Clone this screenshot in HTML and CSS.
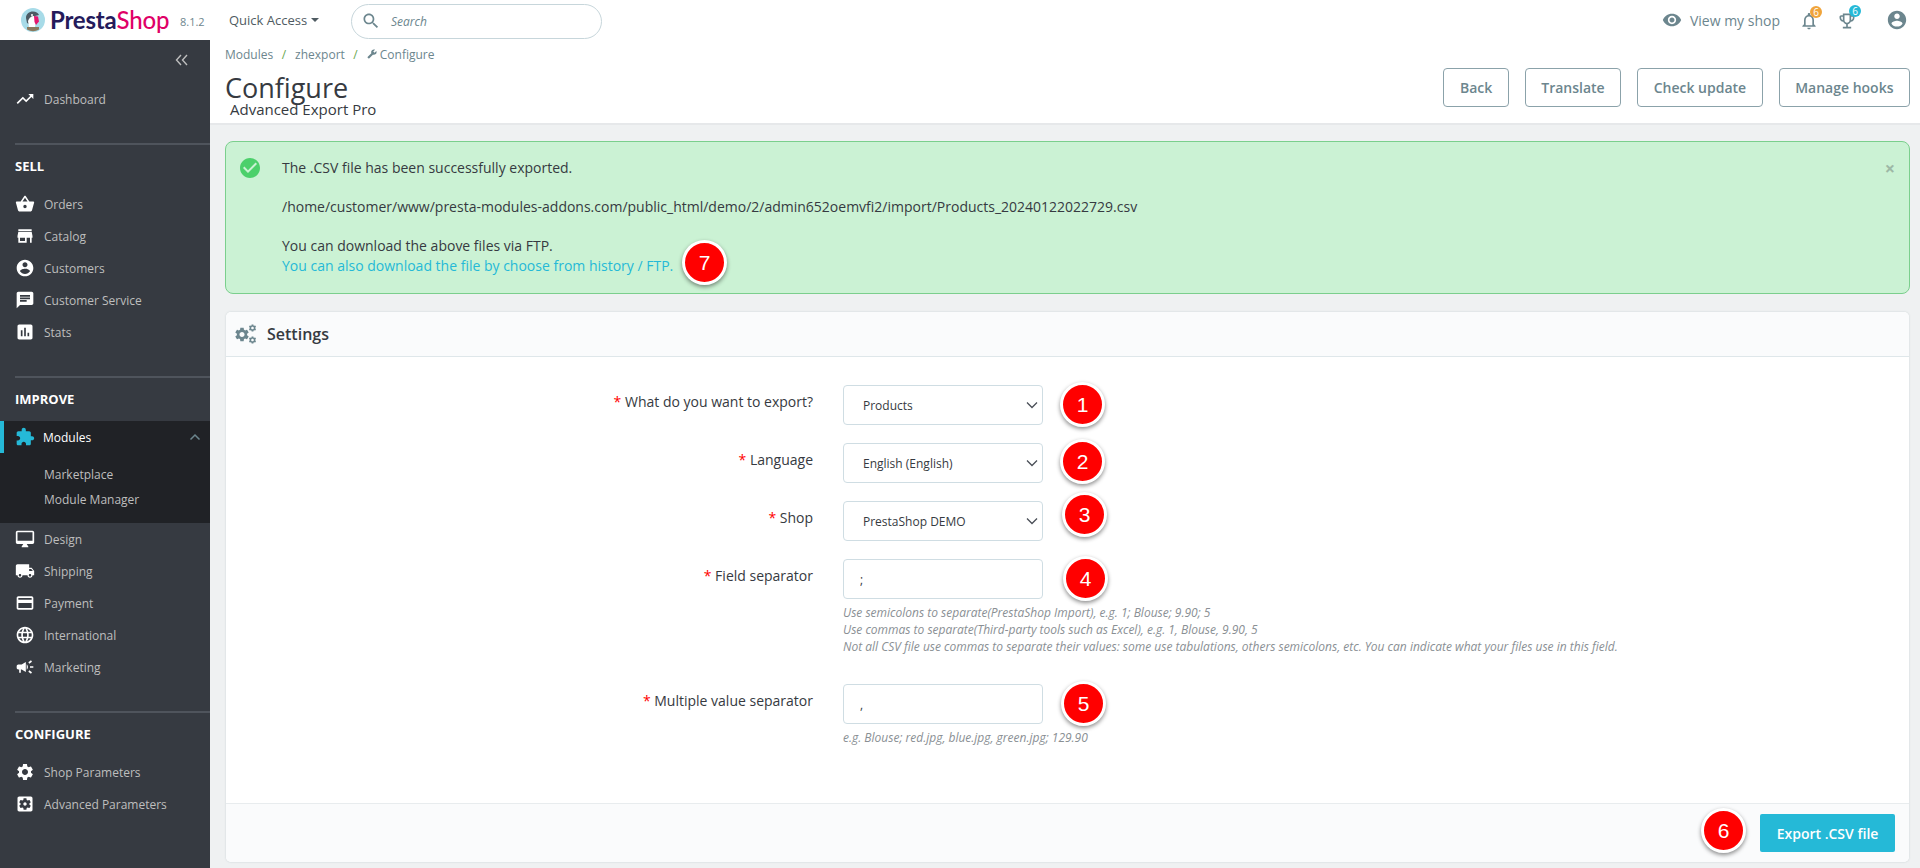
FILE: index.html
```html
<!DOCTYPE html>
<html lang="en">
<head>
<meta charset="utf-8">
<title>Configure - Advanced Export Pro</title>
<link rel="stylesheet" href="styles.css">
</head>
<body>
<svg class="sprite" aria-hidden="true">
  <symbol id="i-trend" viewBox="0 0 24 24"><path d="M16 6l2.29 2.29-4.88 4.88-4-4L2 16.59 3.41 18l6-6 4 4 6.3-6.29L22 12V6z"/></symbol>
  <symbol id="i-basket" viewBox="0 0 24 24"><path d="M17.21 9l-4.38-6.56c-.19-.28-.51-.42-.83-.42-.32 0-.64.14-.83.43L6.79 9H2c-.55 0-1 .45-1 1 0 .09.01.18.04.27l2.54 9.27c.23.84 1 1.46 1.92 1.46h13c.92 0 1.69-.62 1.93-1.46l2.54-9.27L23 10c0-.55-.45-1-1-1h-4.79zM9 9l3-4.4L15 9H9zm3 8c-1.1 0-2-.9-2-2s.9-2 2-2 2 .9 2 2-.9 2-2 2z"/></symbol>
  <symbol id="i-store" viewBox="0 0 24 24"><path d="M20 4H4v2h16V4zm1 10v-2l-1-5H4l-1 5v2h1v6h10v-6h4v6h2v-6h1zm-9 4H6v-4h6v4z"/></symbol>
  <symbol id="i-account" viewBox="0 0 24 24"><path d="M12 2C6.48 2 2 6.48 2 12s4.48 10 10 10 10-4.48 10-10S17.52 2 12 2zm0 3c1.66 0 3 1.34 3 3s-1.34 3-3 3-3-1.34-3-3 1.34-3 3-3zm0 14.2c-2.5 0-4.71-1.28-6-3.22.03-1.99 4-3.08 6-3.08 1.99 0 5.97 1.09 6 3.08-1.29 1.94-3.5 3.22-6 3.22z"/></symbol>
  <symbol id="i-chat" viewBox="0 0 24 24"><path d="M20 2H4c-1.1 0-1.99.9-1.99 2L2 22l4-4h14c1.1 0 2-.9 2-2V4c0-1.1-.9-2-2-2zM6 9h12v2H6V9zm8 5H6v-2h8v2zm4-6H6V6h12v2z"/></symbol>
  <symbol id="i-stats" viewBox="0 0 24 24"><path d="M19 3H5c-1.1 0-2 .9-2 2v14c0 1.1.9 2 2 2h14c1.1 0 2-.9 2-2V5c0-1.1-.9-2-2-2zM9 17H7v-7h2v7zm4 0h-2V7h2v10zm4 0h-2v-4h2v4z"/></symbol>
  <symbol id="i-puzzle" viewBox="0 0 24 24"><path d="M20.5 11H19V7c0-1.1-.9-2-2-2h-4V3.5C13 2.12 11.88 1 10.5 1S8 2.12 8 3.5V5H4c-1.1 0-1.99.9-1.99 2v3.8H3.5c1.49 0 2.7 1.21 2.7 2.7s-1.21 2.7-2.7 2.7H2V20c0 1.1.9 2 2 2h3.8v-1.5c0-1.49 1.21-2.7 2.7-2.7 1.49 0 2.7 1.21 2.7 2.7V22H17c1.1 0 2-.9 2-2v-4h1.5c1.38 0 2.5-1.12 2.5-2.5S21.88 11 20.5 11z"/></symbol>
  <symbol id="i-desktop" viewBox="0 0 24 24"><path d="M21 2H3c-1.1 0-2 .9-2 2v12c0 1.1.9 2 2 2h7l-2 3v1h8v-1l-2-3h7c1.1 0 2-.9 2-2V4c0-1.1-.9-2-2-2zm0 12H3V4h18v10z"/></symbol>
  <symbol id="i-truck" viewBox="0 0 24 24"><path d="M20 8h-3V4H3c-1.1 0-2 .9-2 2v11h2c0 1.66 1.34 3 3 3s3-1.34 3-3h6c0 1.66 1.34 3 3 3s3-1.34 3-3h2v-5l-3-4zM6 18.5c-.83 0-1.5-.67-1.5-1.5s.67-1.5 1.5-1.5 1.5.67 1.5 1.5-.67 1.5-1.5 1.5zm13.5-9l1.96 2.5H17V9.5h2.5zm-1.5 9c-.83 0-1.5-.67-1.5-1.5s.67-1.5 1.5-1.5 1.5.67 1.5 1.5-.67 1.5-1.5 1.5z"/></symbol>
  <symbol id="i-card" viewBox="0 0 24 24"><path d="M20 4H4c-1.11 0-1.99.89-1.99 2L2 18c0 1.11.89 2 2 2h16c1.11 0 2-.89 2-2V6c0-1.11-.89-2-2-2zm0 14H4v-6h16v6zm0-10H4V6h16v2z"/></symbol>
  <symbol id="i-globe" viewBox="0 0 24 24"><path d="M11.99 2C6.47 2 2 6.48 2 12s4.47 10 9.99 10C17.52 22 22 17.52 22 12S17.52 2 11.99 2zm6.93 6h-2.95c-.32-1.25-.78-2.45-1.38-3.56 1.84.63 3.37 1.91 4.33 3.56zM12 4.04c.83 1.2 1.48 2.53 1.91 3.96h-3.82c.43-1.43 1.08-2.76 1.91-3.96zM4.26 14C4.1 13.36 4 12.69 4 12s.1-1.36.26-2h3.38c-.08.66-.14 1.32-.14 2 0 .68.06 1.34.14 2H4.26zm.82 2h2.95c.32 1.25.78 2.45 1.38 3.56-1.84-.63-3.37-1.9-4.33-3.56zm2.95-8H5.08c.96-1.66 2.49-2.93 4.33-3.56C8.81 5.55 8.35 6.75 8.03 8zM12 19.96c-.83-1.2-1.48-2.53-1.91-3.96h3.82c-.43 1.43-1.08 2.76-1.91 3.96zM14.34 14H9.66c-.09-.66-.16-1.32-.16-2 0-.68.07-1.35.16-2h4.68c.09.65.16 1.32.16 2 0 .68-.07 1.34-.16 2zm.25 5.56c.6-1.11 1.06-2.31 1.38-3.56h2.95c-.96 1.65-2.49 2.93-4.33 3.56zM16.36 14c.08-.66.14-1.32.14-2 0-.68-.06-1.34-.14-2h3.38c.16.64.26 1.31.26 2s-.1 1.36-.26 2h-3.38z"/></symbol>
  <symbol id="i-campaign" viewBox="0 0 24 24"><path d="M18 11v2h4v-2h-4zm-2 6.61c.96.71 2.21 1.65 3.2 2.39.4-.53.8-1.07 1.2-1.6-.99-.74-2.24-1.68-3.2-2.4-.4.54-.8 1.08-1.2 1.61zM20.4 5.6c-.4-.53-.8-1.07-1.2-1.6-.99.74-2.24 1.68-3.2 2.4.4.53.8 1.07 1.2 1.6.96-.72 2.21-1.65 3.2-2.4zM4 9c-1.1 0-2 .9-2 2v2c0 1.1.9 2 2 2h1v4h2v-4h1l5 3V6L8 9H4zm11.5 3c0-1.33-.58-2.53-1.5-3.35v6.69c.92-.81 1.5-2.01 1.5-3.34z"/></symbol>
  <symbol id="i-gear" viewBox="0 0 24 24"><path d="M19.14 12.94c.04-.3.06-.61.06-.94 0-.32-.02-.64-.07-.94l2.03-1.58c.18-.14.23-.41.12-.61l-1.92-3.32c-.12-.22-.37-.29-.59-.22l-2.39.96c-.5-.38-1.03-.7-1.62-.94l-.36-2.54c-.04-.24-.24-.41-.48-.41h-3.84c-.24 0-.43.17-.47.41l-.36 2.54c-.59.24-1.13.57-1.62.94l-2.39-.96c-.22-.08-.47 0-.59.22L2.74 8.87c-.12.21-.08.47.12.61l2.03 1.58c-.05.3-.09.63-.09.94s.02.64.07.94l-2.03 1.58c-.18.14-.23.41-.12.61l1.92 3.32c.12.22.37.29.59.22l2.39-.96c.5.38 1.03.7 1.62.94l.36 2.54c.05.24.24.41.48.41h3.84c.24 0 .44-.17.47-.41l.36-2.54c.59-.24 1.13-.56 1.62-.94l2.39.96c.22.08.47 0 .59-.22l1.92-3.32c.12-.22.07-.47-.12-.61l-2.01-1.58zM12 15.6c-1.98 0-3.6-1.62-3.6-3.6s1.62-3.6 3.6-3.6 3.6 1.62 3.6 3.6-1.62 3.6-3.6 3.6z"/></symbol>
  <symbol id="i-gearbox" viewBox="0 0 24 24"><path d="M12 10c-1.1 0-2 .9-2 2s.9 2 2 2 2-.9 2-2-.9-2-2-2zm7-7H5c-1.11 0-2 .9-2 2v14c0 1.1.89 2 2 2h14c1.11 0 2-.9 2-2V5c0-1.1-.89-2-2-2zm-1.75 9c0 .23-.02.46-.05.68l1.48 1.16c.13.11.17.3.08.45l-1.4 2.42c-.09.15-.27.21-.43.15l-1.74-.7c-.36.28-.76.51-1.18.69l-.26 1.85c-.03.17-.18.3-.35.3h-2.8c-.17 0-.32-.13-.35-.29l-.26-1.85c-.43-.18-.82-.41-1.18-.69l-1.74.7c-.16.06-.34 0-.43-.15l-1.4-2.42c-.09-.15-.05-.34.08-.45l1.48-1.16c-.03-.23-.05-.46-.05-.69 0-.23.02-.46.05-.68l-1.48-1.16c-.13-.11-.17-.3-.08-.45l1.4-2.42c.09-.15.27-.21.43-.15l1.74.7c.36-.28.76-.51 1.18-.69l.26-1.85c.03-.17.18-.3.35-.3h2.8c.17 0 .32.13.35.29l.26 1.85c.43.18.82.41 1.18.69l1.74-.7c.16-.06.34 0 .43.15l1.4 2.42c.09.15.05.34-.08.45l-1.48 1.16c.03.23.05.46.05.69z"/></symbol>
</svg>

<header class="topbar">
  <a class="logo">
    <svg class="logo-mark" viewBox="0 0 24 26" aria-hidden="true">
      <circle cx="12" cy="13" r="12" fill="#a7dbe8"/>
      <path d="M5 11c0-4 3-6.500 7-6.500 3 0 5 1.500 6 3.500l-4 1-1 2-3 3-2 3-2-1z" fill="#4c5a63"/>
      <path d="M7 14c1-3 3-5 6-5l2 5-1 6H8z" fill="#fff"/>
      <path d="M13 9l4 .5 1 5-3 3.500-1.500-3z" fill="#e5176e"/>
      <path d="M6 20h12v2.500a12 12 0 0 1-12 0z" fill="#8a7a5e"/>
      <circle cx="11" cy="8" r="1" fill="#fff"/>
    </svg>
    <span class="logo-text"><span class="logo-presta">Presta</span><span class="logo-shop">Shop</span></span>
  </a>
  <span class="version">8.1.2</span>
  <span class="quick">Quick Access<i class="caret"></i></span>
  <label class="search">
    <svg class="search-icon" viewBox="0 0 24 24" aria-hidden="true"><path d="M15.5 14h-.79l-.28-.27C15.41 12.59 16 11.11 16 9.500 16 5.910 13.090 3 9.500 3S3 5.910 3 9.500 5.910 16 9.500 16c1.610 0 3.090-.59 4.230-1.570l.27.28v.79l5 4.990L20.490 19l-4.990-5zm-6 0C7.010 14 5 11.990 5 9.500S7.010 5 9.500 5 14 7.010 14 9.500 11.990 14 9.500 14z"/></svg>
    <span class="search-text">Search</span>
  </label>
  <div class="top-right">
    <span class="view-shop">
      <svg class="eye" viewBox="0 0 24 24" aria-hidden="true"><path d="M12 4.500C7 4.500 2.730 7.610 1 12c1.730 4.390 6 7.500 11 7.500s9.270-3.110 11-7.500c-1.730-4.390-6-7.500-11-7.500zM12 17c-2.760 0-5-2.240-5-5s2.240-5 5-5 5 2.240 5 5-2.240 5-5 5zm0-8c-1.660 0-3 1.340-3 3s1.340 3 3 3 3-1.340 3-3-1.340-3-3-3z"/></svg>
      View my shop
    </span>
    <span class="notif notif-bell">
      <svg viewBox="0 0 24 24" aria-hidden="true"><path d="M12 22c1.100 0 2-.9 2-2h-4c0 1.100.9 2 2 2zm6-6v-5c0-3.070-1.630-5.640-4.500-6.320V4c0-.83-.67-1.500-1.500-1.500s-1.500.67-1.500 1.500v.68C7.640 5.360 6 7.920 6 11v5l-2 2v1h16v-1l-2-2zm-2 1H8v-6c0-2.480 1.510-4.500 4-4.500s4 2.020 4 4.500v6z"/></svg>
      <b class="count count-orange">6</b>
    </span>
    <span class="notif notif-cup">
      <svg viewBox="0 0 24 24" aria-hidden="true"><path d="M19 5h-2V3H7v2H5c-1.100 0-2 .9-2 2v1c0 2.550 1.920 4.630 4.390 4.940.63 1.500 1.980 2.630 3.610 2.960V19H7v2h10v-2h-4v-3.100c1.630-.33 2.980-1.460 3.610-2.960C19.080 12.630 21 10.550 21 8V7c0-1.100-.9-2-2-2zM5 8V7h2v3.820C5.840 10.400 5 9.300 5 8zm7 6c-1.650 0-3-1.350-3-3V5h6v6c0 1.650-1.350 3-3 3zm7-6c0 1.300-.84 2.400-2 2.820V7h2v1z"/></svg>
      <b class="count count-blue">6</b>
    </span>
    <svg class="avatar" aria-hidden="true"><use href="#i-account"/></svg>
  </div>
</header>

<div class="layout">
  <nav class="sidebar">
    <div class="collapse">
      <svg viewBox="0 0 14 12" aria-hidden="true"><path d="M6 1 1.500 6 6 11M12 1 7.500 6 12 11"/></svg>
    </div>
    <a class="item item-first"><svg class="ic"><use href="#i-trend"/></svg>Dashboard</a>

    <hr class="sep">
    <h2 class="sect">SELL</h2>
    <a class="item"><svg class="ic"><use href="#i-basket"/></svg>Orders</a>
    <a class="item"><svg class="ic"><use href="#i-store"/></svg>Catalog</a>
    <a class="item"><svg class="ic"><use href="#i-account"/></svg>Customers</a>
    <a class="item"><svg class="ic"><use href="#i-chat"/></svg>Customer Service</a>
    <a class="item"><svg class="ic"><use href="#i-stats"/></svg>Stats</a>

    <hr class="sep">
    <h2 class="sect">IMPROVE</h2>
    <div class="active-group">
      <a class="item item-active"><svg class="ic"><use href="#i-puzzle"/></svg>Modules
        <svg class="chev-up" viewBox="0 0 12 8" aria-hidden="true"><path d="M1.500 6.500 6 2l4.500 4.500"/></svg>
      </a>
      <a class="sub">Marketplace</a>
      <a class="sub">Module Manager</a>
    </div>
    <a class="item"><svg class="ic"><use href="#i-desktop"/></svg>Design</a>
    <a class="item"><svg class="ic"><use href="#i-truck"/></svg>Shipping</a>
    <a class="item"><svg class="ic"><use href="#i-card"/></svg>Payment</a>
    <a class="item"><svg class="ic"><use href="#i-globe"/></svg>International</a>
    <a class="item"><svg class="ic"><use href="#i-campaign"/></svg>Marketing</a>

    <hr class="sep">
    <h2 class="sect">CONFIGURE</h2>
    <a class="item"><svg class="ic"><use href="#i-gear"/></svg>Shop Parameters</a>
    <a class="item"><svg class="ic"><use href="#i-gearbox"/></svg>Advanced Parameters</a>
  </nav>

  <main class="content">
    <section class="pagehead">
      <div class="head-left">
        <div class="crumbs">
          <span>Modules</span><i class="slash">/</i><span>zhexport</span><i class="slash">/</i>
          <svg class="wrench" viewBox="0 0 24 24" aria-hidden="true"><path d="M1.300 19l9.100-9.100c-.9-2.300-.4-5 1.500-6.900 2-2 5-2.400 7.400-1.300L15 6l3 3 4.400-4.300c1.200 2.400.7 5.400-1.300 7.400-1.900 1.900-4.600 2.400-6.900 1.500l-9.100 9.100c-.4.4-1 .4-1.400 0l-2.300-2.300c-.5-.4-.5-1.100-.1-1.400z"/></svg>
          <span>Configure</span>
        </div>
        <h1 class="title">Configure</h1>
        <div class="subtitle">Advanced Export Pro</div>
      </div>
      <div class="head-actions">
        <a class="btn">Back</a>
        <a class="btn">Translate</a>
        <a class="btn">Check update</a>
        <a class="btn">Manage hooks</a>
      </div>
    </section>

    <div class="page">
      <div class="alert">
        <svg class="alert-icon" viewBox="0 0 24 24" aria-hidden="true"><path d="M12 2C6.480 2 2 6.480 2 12s4.480 10 10 10 10-4.480 10-10S17.520 2 12 2zm-2 15l-5-5 1.410-1.410L10 14.170l7.590-7.590L19 8l-9 9z"/></svg>
        <div class="alert-body">
          <p>The .CSV file has been successfully exported.</p>
          <p>/home/customer/www/presta-modules-addons.com/public_html/demo/2/admin652oemvfi2/import/Products_20240122022729.csv</p>
          <p class="tight">You can download the above files via FTP.</p>
          <p><a class="link">You can also download the file by choose from history / FTP.</a></p>
        </div>
        <span class="close">×</span>
        <span class="mark mark-7">7</span>
      </div>

      <section class="panel">
        <div class="panel-head">
          <svg class="cogs" viewBox="0 0 22 20" aria-hidden="true">
            <use href="#i-gear" x="-1.500" y="2" width="17" height="17"/>
            <use href="#i-gear" x="13" y="-.5" width="9" height="9"/>
            <use href="#i-gear" x="13" y="11.500" width="9" height="9"/>
          </svg>
          <h3>Settings</h3>
        </div>
        <form class="panel-body">
          <div class="row">
            <label class="lbl"><em>*</em> What do you want to export?</label>
            <div class="ctrl">
              <div class="select-wrap">
                <select class="field"><option>Products</option></select>
                <svg class="chev" viewBox="0 0 12 8" aria-hidden="true"><path d="M1 1.500 6 6.500l5-5"/></svg>
              </div>
              <span class="mark mark-1">1</span>
            </div>
          </div>
          <div class="row">
            <label class="lbl"><em>*</em> Language</label>
            <div class="ctrl">
              <div class="select-wrap">
                <select class="field"><option>English (English)</option></select>
                <svg class="chev" viewBox="0 0 12 8" aria-hidden="true"><path d="M1 1.500 6 6.500l5-5"/></svg>
              </div>
              <span class="mark mark-2">2</span>
            </div>
          </div>
          <div class="row">
            <label class="lbl"><em>*</em> Shop</label>
            <div class="ctrl">
              <div class="select-wrap">
                <select class="field"><option>PrestaShop DEMO</option></select>
                <svg class="chev" viewBox="0 0 12 8" aria-hidden="true"><path d="M1 1.500 6 6.500l5-5"/></svg>
              </div>
              <span class="mark mark-3">3</span>
            </div>
          </div>
          <div class="row row-spaced">
            <label class="lbl"><em>*</em> Field separator</label>
            <div class="ctrl">
              <input class="field field-text" type="text" value=";">
              <span class="mark mark-4">4</span>
              <div class="help">
                <div>Use semicolons to separate(PrestaShop Import), e.g. 1; Blouse; 9.90; 5</div>
                <div>Use commas to separate(Third-party tools such as Excel), e.g. 1, Blouse, 9.90, 5</div>
                <div>Not all CSV file use commas to separate their values: some use tabulations, others semicolons, etc. You can indicate what your files use in this field.</div>
              </div>
            </div>
          </div>
          <div class="row">
            <label class="lbl"><em>*</em> Multiple value separator</label>
            <div class="ctrl">
              <input class="field field-text" type="text" value=",">
              <span class="mark mark-5">5</span>
              <div class="help"><div>e.g. Blouse; red.jpg, blue.jpg, green.jpg; 129.90</div></div>
            </div>
          </div>
        </form>
        <div class="panel-foot">
          <span class="mark mark-6">6</span>
          <button class="btn-primary" type="button">Export .CSV file</button>
        </div>
      </section>
    </div>
  </main>
</div>
</body>
</html>
```

FILE: styles.css
```css
* { box-sizing: border-box; }
html, body { height: 100%; }
body {
  margin: 0;
  font-family: "Open Sans", "Noto Sans", sans-serif;
  font-size: 14px;
  color: #363a41;
  background: #eff1f2;
  overflow: hidden;
}
.sprite { display: none; }
a { text-decoration: none; color: inherit; }
h1, h2, h3, p { margin: 0; }

/* top bar */
.topbar {
  display: flex;
  align-items: center;
  height: 40px;
  background: #fff;
  padding-left: 21px;
}
.logo { display: flex; align-items: center; width: 150px; }
.logo-mark { width: 24px; height: 26px; flex: none; }
.logo-text {
  margin-left: 5px;
  font-family: "Lato", "Open Sans", sans-serif;
  font-size: 24px;
  font-weight: 700;
  letter-spacing: -.2px;
  line-height: 40px;
}
.logo-presta { color: #251b5b; }
.logo-shop { color: #df0067; font-weight: 500; }
.version { margin-left: 9px; width: 48px; font-size: 11px; color: #6c868e; padding-top: 2px; }
.quick { display: flex; align-items: center; width: 123px; padding-left: 1px; font-size: 13px; color: #4f5b62; }
.caret {
  margin-left: 4px;
  border: 4px solid transparent;
  border-top-color: #4f5b62;
  border-bottom-width: 0;
}
.search {
  display: flex;
  align-items: center;
  width: 251px;
  height: 35px;
  margin-top: 2px;
  padding-left: 9px;
  border: 1px solid #c7d6db;
  border-radius: 18px;
}
.search-icon { width: 20px; height: 20px; fill: #6c868e; }
.search-text { margin-left: 10px; font-size: 12px; font-style: italic; color: #6c868e; }
.top-right { margin-left: auto; display: flex; align-items: center; padding-right: 12px; }
.view-shop { display: flex; align-items: center; font-size: 14px; color: #6c868e; }
.eye { width: 20px; height: 20px; margin-right: 8px; fill: #6c868e; }
.notif { position: relative; display: block; width: 20px; height: 20px; margin-top: 2px; }
.notif svg { display: block; width: 20px; height: 20px; fill: #6c868e; }
.notif-bell { margin-left: 19px; }
.notif-cup { margin-left: 18px; }
.count {
  position: absolute;
  top: -5px;
  left: 11px;
  width: 12px;
  height: 12px;
  border-radius: 50%;
  color: #fff;
  font-size: 10px;
  line-height: 12px;
  text-align: center;
  font-weight: 400;
}
.count-orange { background: #f0a43b; }
.count-blue { background: #25b9d7; top: -6px; left: 12px; }
.avatar { width: 22px; height: 22px; margin-left: 29px; fill: #6c868e; }

/* layout */
.layout { display: grid; grid-template-columns: 210px 1fr; height: 828px; }

/* sidebar */
.sidebar { background: #363a41; color: #bebebe; font-size: 12px; }
.collapse { display: flex; align-items: center; justify-content: flex-end; height: 40px; padding-right: 21px; margin-bottom: 3px; }
.collapse svg { width: 14px; height: 12px; fill: none; stroke: #bebebe; stroke-width: 1.400; }
.item { display: flex; align-items: center; height: 32px; padding-left: 15px; }
.ic { flex: none; width: 20px; height: 20px; margin-right: 9px; fill: #fff; }
.sep { height: 2px; margin: 28px 0 0 15px; border: 0; background: #4f545c; }
.sect { height: 20px; margin: 11px 0 12px 15px; font-size: 13px; font-weight: 700; line-height: 20px; color: #fff; }
.active-group { background: #202226; padding-bottom: 11px; }
.item-active { position: relative; color: #fff; box-shadow: inset 4px 0 0 #25b9d7; }
.item-active .ic { fill: #25b9d7; margin-right: 8px; }
.chev-up { position: absolute; right: 9px; top: 12px; width: 12px; height: 8px; fill: none; stroke: #6c868e; stroke-width: 1.500; }
.sub { display: flex; align-items: center; height: 25px; padding-left: 44px; font-size: 12px; }
.active-group .item + .sub { margin-top: 9px; }

/* content */
.content { display: flex; flex-direction: column; min-width: 0; height: 828px; }
.pagehead {
  display: flex;
  justify-content: space-between;
  flex: none;
  height: 85px;
  padding: 0 10px 0 15px;
  background: #fff;
  border-bottom: 2px solid #e6e8ea;
}
.crumbs { display: flex; align-items: center; height: 28px; font-size: 12px; color: #6c868e; }
.slash { margin: 0 9px 0 8.500px; font-style: normal; color: #6aa84f; }
.wrench { width: 10px; height: 10px; margin-right: 3px; fill: #6c868e; }
.title { margin-top: -1px; font-size: 27px; font-weight: 400; line-height: 42px; color: #363a41; }
.subtitle { margin: -10px 0 0 5px; font-size: 15px; line-height: 20px; color: #363a41; }
.head-actions { display: flex; gap: 16px; padding-top: 28px; }
.btn {
  display: flex;
  align-items: center;
  height: 39px;
  padding: 0 15.500px;
  border: 1px solid #8ba2aa;
  border-radius: 4px;
  font-size: 14px;
  font-weight: 600;
  color: #6c868e;
}

.page { flex: 1; display: flex; flex-direction: column; min-height: 0; padding: 16px 10px 6px 15px; }

/* alert */
.alert {
  position: relative;
  display: flex;
  flex: none;
  height: 153px;
  padding: 16px 14px 0 12px;
  background: #cbf2d4;
  border: 1px solid #7bcf8d;
  border-radius: 8px;
  color: #363a41;
}
.alert-icon { flex: none; width: 24px; height: 24px; margin: -2px 20px 0 0; fill: #4cd06b; }
.alert-body { flex: 1; }
.alert-body p { line-height: 20px; margin-bottom: 19px; font-size: 14px; }
.alert-body p.tight { margin-bottom: 0; }
.link { color: #25b9d7; }
.close { font-size: 18px; line-height: 20px; font-weight: 700; color: #9db8a6; }

/* numbered marks */
.mark {
  display: flex;
  align-items: center;
  justify-content: center;
  width: 45px;
  height: 45px;
  border: 3px solid #fff;
  border-radius: 50%;
  background: #f00;
  color: #fff;
  font-family: "Liberation Sans", Arial, sans-serif;
  font-size: 21px;
  box-shadow: 0 2px 4px rgba(0, 0, 0, .45);
}
.mark-1, .mark-2, .mark-3, .mark-4, .mark-5, .mark-7 { position: absolute; }
.mark-1 { left: 217px; top: -3px; }
.mark-2 { left: 217px; top: -4px; }
.mark-3 { left: 219px; top: -9px; }
.mark-4 { left: 220px; top: -3px; }
.mark-5 { left: 218px; top: -3px; }
.mark-7 { left: 456px; top: 98px; }
.mark-6 { margin: -5px 14px 0 0; }

/* panel */
.panel {
  display: flex;
  flex-direction: column;
  flex: 1;
  min-height: 0;
  margin: 18px 1px 0;
  background: #fff;
  border-radius: 5px;
  box-shadow: 0 0 2px rgba(108, 134, 142, .35);
}
.panel-head {
  display: flex;
  align-items: center;
  flex: none;
  height: 45px;
  padding-left: 9px;
  background: #fafbfc;
  border-bottom: 1px solid #dfe7ea;
  border-radius: 5px 5px 0 0;
}
.cogs { width: 22px; height: 20px; margin-right: 10px; fill: #6c868e; }
.panel-head h3 { font-size: 16px; font-weight: 600; color: #363a41; }
.panel-body { flex: 1; display: flex; flex-direction: column; gap: 18px; padding-top: 28px; }
.row { display: flex; gap: 30px; }
.row-spaced { margin-bottom: 11px; }
.lbl { flex: none; width: 587px; padding-top: 7px; text-align: right; font-size: 14px; line-height: 20px; }
.lbl em { font-style: normal; color: #f00; }
.ctrl { position: relative; width: 200px; }
.select-wrap { position: relative; }
.field {
  display: block;
  width: 200px;
  height: 40px;
  padding: 0 19px;
  border: 1px solid #cfdde3;
  border-radius: 4px;
  background: #fff;
  font-family: inherit;
  font-size: 12px;
  color: #363a41;
  appearance: none;
}
.field-text { padding-left: 16px; }
.chev { position: absolute; right: 5px; top: 16px; width: 12px; height: 8px; fill: none; stroke: #4a4f57; stroke-width: 1.300; pointer-events: none; }
.help {
  width: 900px;
  margin-top: 5px;
  font-size: 12px;
  line-height: 17px;
  font-style: italic;
  color: #8a8f94;
}
.panel-foot {
  display: flex;
  align-items: center;
  justify-content: flex-end;
  flex: none;
  height: 59px;
  padding-right: 14px;
  background: #fafbfc;
  border-top: 1px solid #e8ecee;
  border-radius: 0 0 5px 5px;
}
.btn-primary {
  height: 38px;
  width: 135px;
  border: 0;
  border-radius: 2px;
  background: #25b9d7;
  color: #fff;
  font-family: inherit;
  font-size: 14px;
  font-weight: 600;
}
```
